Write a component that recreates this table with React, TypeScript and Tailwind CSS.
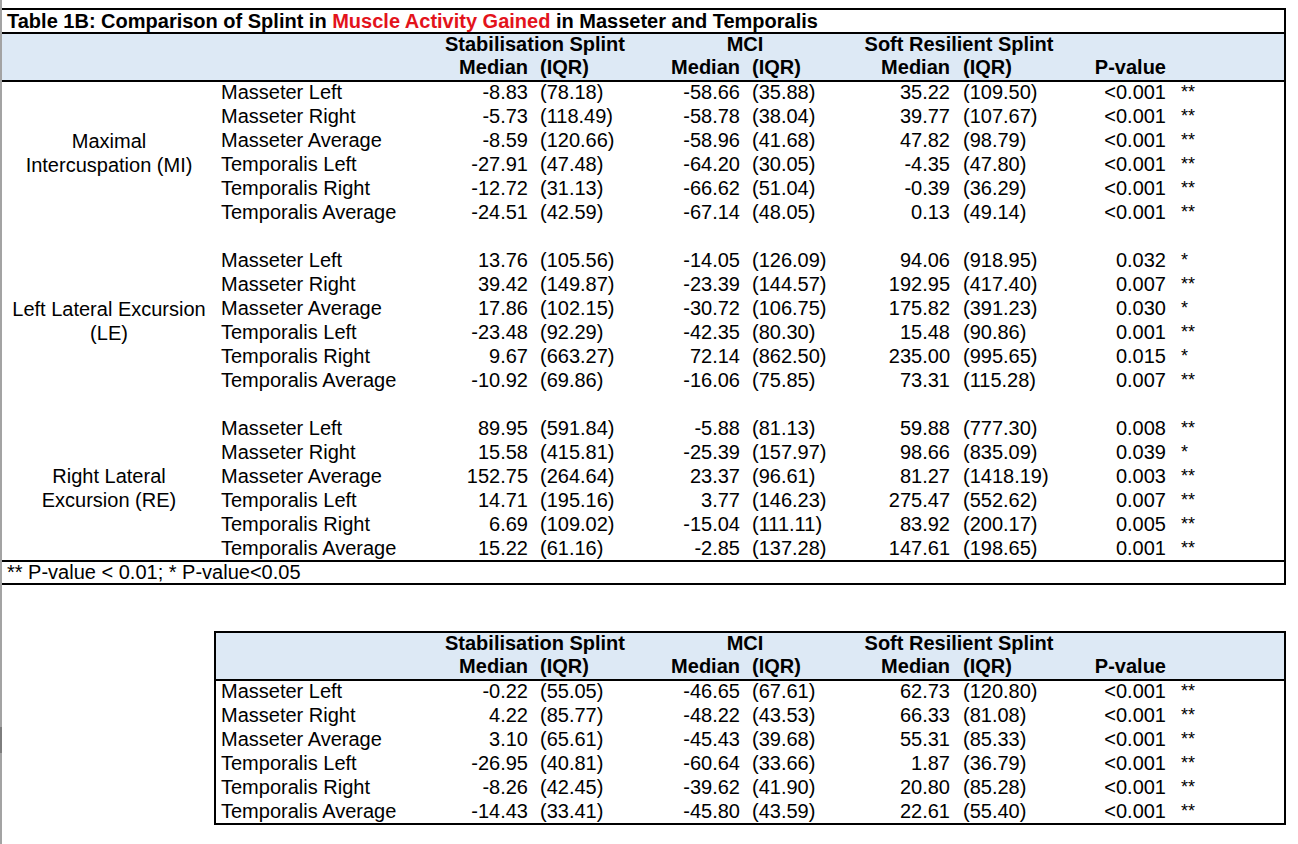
import React from "react"

type Row = { m: string; s: [string, string]; c: [string, string]; r: [string, string]; p: string; st: string }

const muscles = [
  "Masseter Left",
  "Masseter Right",
  "Masseter Average",
  "Temporalis Left",
  "Temporalis Right",
  "Temporalis Average",
]

function mk(vals: [string, string, string, string, string, string, string, string][]): Row[] {
  return vals.map((v, i) => ({
    m: muscles[i],
    s: [v[0], v[1]],
    c: [v[2], v[3]],
    r: [v[4], v[5]],
    p: v[6],
    st: v[7],
  }))
}

const groups: { label: string[]; rows: Row[] }[] = [
  {
    label: ["Maximal", "Intercuspation (MI)"],
    rows: mk([
      ["-8.83", "(78.18)", "-58.66", "(35.88)", "35.22", "(109.50)", "<0.001", "**"],
      ["-5.73", "(118.49)", "-58.78", "(38.04)", "39.77", "(107.67)", "<0.001", "**"],
      ["-8.59", "(120.66)", "-58.96", "(41.68)", "47.82", "(98.79)", "<0.001", "**"],
      ["-27.91", "(47.48)", "-64.20", "(30.05)", "-4.35", "(47.80)", "<0.001", "**"],
      ["-12.72", "(31.13)", "-66.62", "(51.04)", "-0.39", "(36.29)", "<0.001", "**"],
      ["-24.51", "(42.59)", "-67.14", "(48.05)", "0.13", "(49.14)", "<0.001", "**"],
    ]),
  },
  {
    label: ["Left Lateral Excursion", "(LE)"],
    rows: mk([
      ["13.76", "(105.56)", "-14.05", "(126.09)", "94.06", "(918.95)", "0.032", "*"],
      ["39.42", "(149.87)", "-23.39", "(144.57)", "192.95", "(417.40)", "0.007", "**"],
      ["17.86", "(102.15)", "-30.72", "(106.75)", "175.82", "(391.23)", "0.030", "*"],
      ["-23.48", "(92.29)", "-42.35", "(80.30)", "15.48", "(90.86)", "0.001", "**"],
      ["9.67", "(663.27)", "72.14", "(862.50)", "235.00", "(995.65)", "0.015", "*"],
      ["-10.92", "(69.86)", "-16.06", "(75.85)", "73.31", "(115.28)", "0.007", "**"],
    ]),
  },
  {
    label: ["Right Lateral", "Excursion (RE)"],
    rows: mk([
      ["89.95", "(591.84)", "-5.88", "(81.13)", "59.88", "(777.30)", "0.008", "**"],
      ["15.58", "(415.81)", "-25.39", "(157.97)", "98.66", "(835.09)", "0.039", "*"],
      ["152.75", "(264.64)", "23.37", "(96.61)", "81.27", "(1418.19)", "0.003", "**"],
      ["14.71", "(195.16)", "3.77", "(146.23)", "275.47", "(552.62)", "0.007", "**"],
      ["6.69", "(109.02)", "-15.04", "(111.11)", "83.92", "(200.17)", "0.005", "**"],
      ["15.22", "(61.16)", "-2.85", "(137.28)", "147.61", "(198.65)", "0.001", "**"],
    ]),
  },
]

const overall = mk([
  ["-0.22", "(55.05)", "-46.65", "(67.61)", "62.73", "(120.80)", "<0.001", "**"],
  ["4.22", "(85.77)", "-48.22", "(43.53)", "66.33", "(81.08)", "<0.001", "**"],
  ["3.10", "(65.61)", "-45.43", "(39.68)", "55.31", "(85.33)", "<0.001", "**"],
  ["-26.95", "(40.81)", "-60.64", "(33.66)", "1.87", "(36.79)", "<0.001", "**"],
  ["-8.26", "(42.45)", "-39.62", "(41.90)", "20.80", "(85.28)", "<0.001", "**"],
  ["-14.43", "(33.41)", "-45.80", "(43.59)", "22.61", "(55.40)", "<0.001", "**"],
])

// columns after the group label: muscle | stab med | stab iqr | mci med | mci iqr | soft med | soft iqr | p | stars
const cols = "grid grid-cols-[214px_100px_110px_102px_108px_102px_110px_107px_1fr]"

function DataRow({ r, last }: { r: Row; last?: boolean }) {
  return (
    <div className={`${cols} ${last ? "h-[22px]" : "h-[24px]"} items-start leading-[21px]`}>
      <div className="pl-[5px] whitespace-nowrap">{r.m}</div>
      <div className="pr-[2px] text-right">{r.s[0]}</div>
      <div className="pl-[10px]">{r.s[1]}</div>
      <div className="pr-[2px] text-right">{r.c[0]}</div>
      <div className="pl-[10px]">{r.c[1]}</div>
      <div className="pr-[2px] text-right">{r.r[0]}</div>
      <div className="pl-[11px]">{r.r[1]}</div>
      <div className="pr-[3px] text-right">{r.p}</div>
      <div className="pl-[12px] text-[18px]">{r.st}</div>
    </div>
  )
}

function Header() {
  return (
    <div className="font-bold leading-[21px]">
      <div className={`${cols} h-[23px]`}>
        <div />
        <div className="col-span-2 text-center">Stabilisation Splint</div>
        <div className="col-span-2 text-center">MCI</div>
        <div className="col-span-2 pl-[6px] text-center">Soft Resilient Splint</div>
        <div />
        <div />
      </div>
      <div className={`${cols} h-[23px]`}>
        <div />
        <div className="pr-[2px] text-right">Median</div>
        <div className="pl-[10px]">(IQR)</div>
        <div className="pr-[2px] text-right">Median</div>
        <div className="pl-[10px]">(IQR)</div>
        <div className="pr-[2px] text-right">Median</div>
        <div className="pl-[11px]">(IQR)</div>
        <div className="pr-[3px] text-right">P-value</div>
        <div />
      </div>
    </div>
  )
}

export default function App() {
  return (
    <div
      className="flex h-[844px] w-[1298px] bg-white text-[20px] text-black"
      style={{ fontFamily: '"Liberation Sans", Arial, sans-serif' }}
    >
      <div className="flex w-[2px] flex-col">
        <div className="h-[727px] bg-[#a3a3a3]" />
        <div className="h-[26px] bg-[#7d7d7d]" />
        <div className="flex-1 bg-[#a3a3a3]" />
      </div>

      <div className="pt-[8px]">
        {/* Table 1B */}
        <div className="w-[1284px] border-t-2 border-r-2 border-b-2 border-black">
          <div className="h-[22px] pl-[5px] font-bold leading-[22px]">
            Table 1B: Comparison of Splint in <span className="text-[#e3131b]">Muscle Activity Gained</span> in
            Masseter and Temporalis
          </div>
          <div className="flex border-t-2 border-b-2 border-black bg-[#dde9f5]">
            <div className="w-[214px]" />
            <div className="flex-1">
              <Header />
            </div>
          </div>
          {groups.map((g, gi) => (
            <div key={gi}>
              <div className="flex">
                <div className="flex w-[214px] flex-col items-center justify-center pb-[2px] leading-[24px]">
                  {g.label.map((l) => (
                    <div key={l} className="whitespace-nowrap">
                      {l}
                    </div>
                  ))}
                </div>
                <div className="flex-1">
                  {g.rows.map((r, ri) => (
                    <DataRow key={r.m} r={r} last={gi === groups.length - 1 && ri === g.rows.length - 1} />
                  ))}
                </div>
              </div>
              {gi < groups.length - 1 && <div className="h-[24px]" />}
            </div>
          ))}
          <div className="h-[23px] border-t-2 border-black pl-[5px] leading-[21px]">
            ** P-value &lt; 0.01; * P-value&lt;0.05
          </div>
        </div>

        {/* overall table */}
        <div className="mt-[46px] ml-[212px] w-[1072px] border-2 border-black">
          <div className="border-b-2 border-black bg-[#dde9f5]">
            <Header />
          </div>
          {overall.map((r, i) => (
            <DataRow key={r.m} r={r} last={i === overall.length - 1} />
          ))}
        </div>
      </div>
    </div>
  )
}
